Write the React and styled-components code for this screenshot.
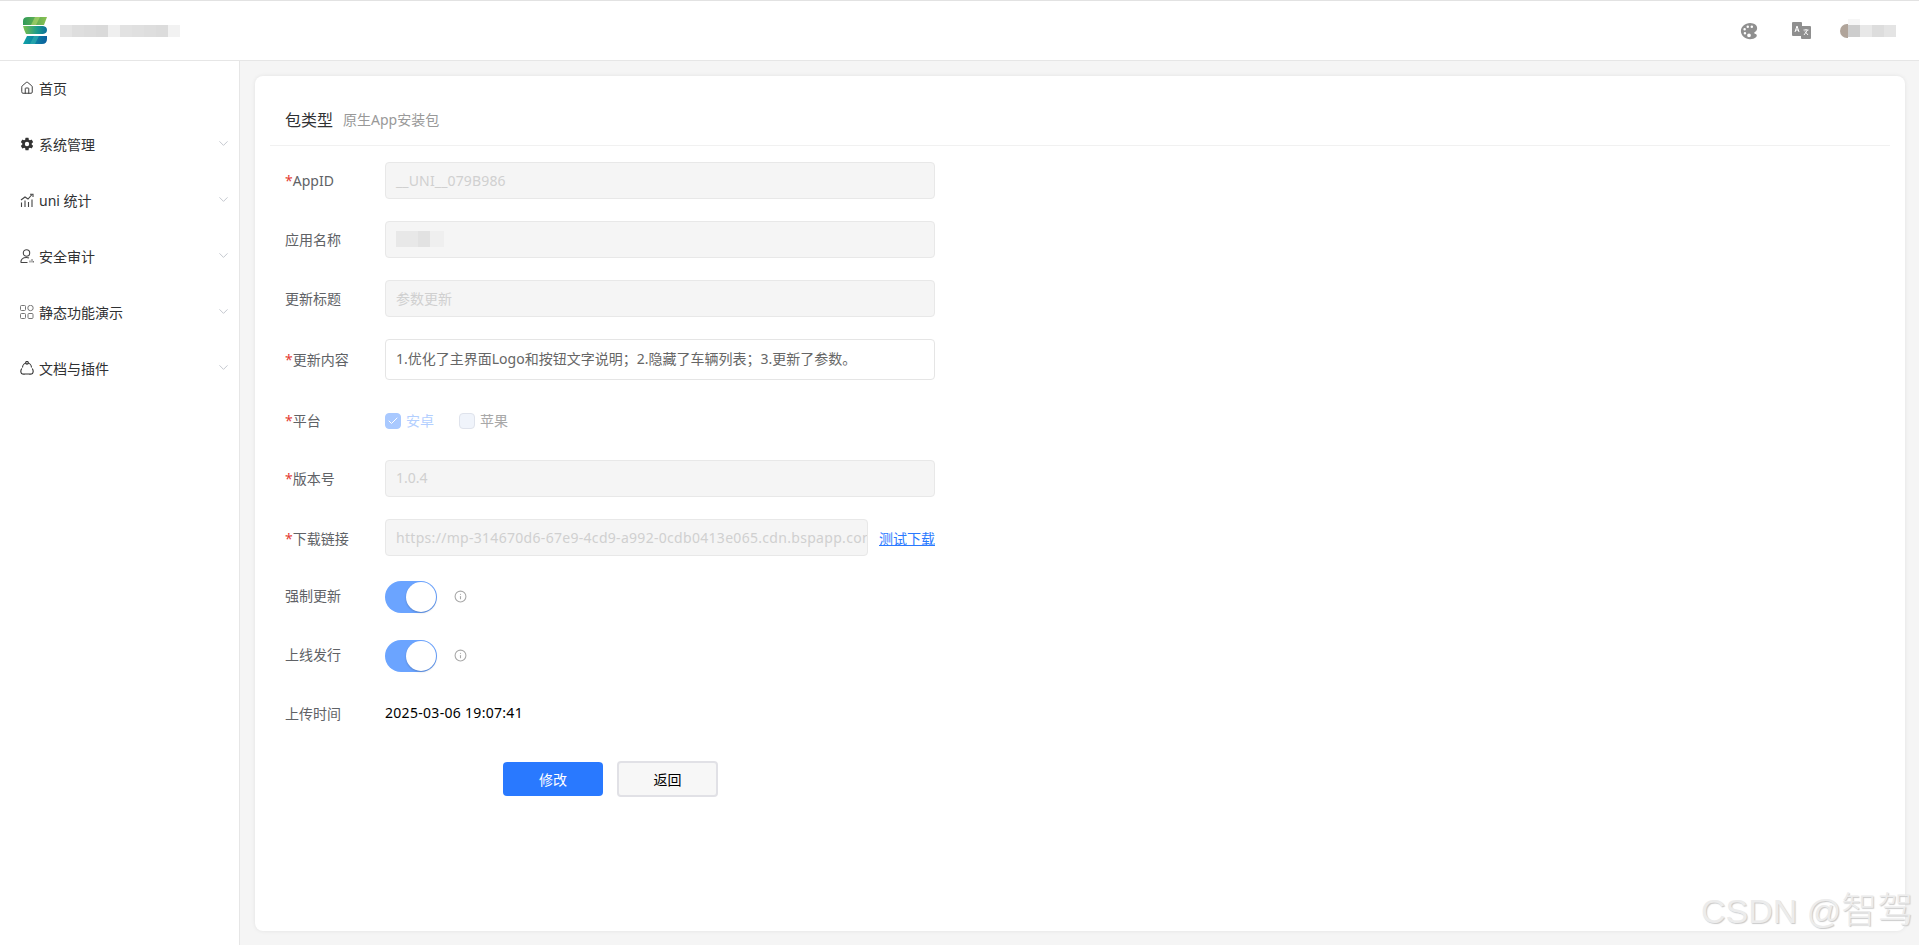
import styled, { createGlobalStyle } from "styled-components";
import { House, ChevronDown, Info, Check } from "lucide-react";
import { IoSettingsSharp, IoColorPalette } from "react-icons/io5";

const GlobalStyle = createGlobalStyle`
    html, body {
        margin: 0;
        padding: 0;
        height: 945px;
        overflow: hidden;
        background: #f5f5f5;
        font-family: "Noto Sans", "Noto Sans CJK SC", sans-serif;
        font-size: 14px;
    }
    * {
        box-sizing: border-box;
    }
`

const Page = styled.div`
    position: relative;
    height: 945px;
    display: flex;
    flex-direction: column;
`

const Header = styled.header`
    height: 61px;
    flex-shrink: 0;
    background: #fff;
    border-top: 1px solid #e2e2e2;
    border-bottom: 1px solid #e6e6e6;
    display: flex;
    align-items: center;
    justify-content: space-between;
    padding: 0 23px;
`

const Brand = styled.div`
    display: flex;
    align-items: center;
    gap: 13px;
`

const Tools = styled.div`
    display: flex;
    align-items: center;
    color: #8f8f8f;
`

const ToolIcon = styled.span`
    display: flex;
    margin-right: ${(p) => p.$gap}px;
`

const Mosaic = styled.div`
    display: flex;
    height: ${(p) => p.$h}px;
`

const Cell = styled.i`
    display: block;
    width: ${(p) => p.$w}px;
    background: ${(p) => p.$c};
`

const Avatar = styled.div`
    position: relative;
    display: flex;
    align-items: center;
    padding-left: 4px;
    &::before {
        content: "";
        position: absolute;
        left: 0;
        top: -1px;
        width: 8px;
        height: 14px;
        border-radius: 8px 0 0 8px;
        background: #b0a49a;
    }
    &::after {
        content: "";
        position: absolute;
        left: 8px;
        top: -6px;
        width: 12px;
        height: 6px;
        background: #f6f6f6;
    }
`

const Body = styled.div`
    flex: 1;
    display: flex;
    min-height: 0;
`

const Sidebar = styled.aside`
    width: 240px;
    flex-shrink: 0;
    background: #fff;
    border-right: 1px solid #e6e6e6;
`

const MenuItem = styled.div`
    height: 56px;
    display: flex;
    align-items: center;
    padding: 0 8px 3px 20px;
    color: #303133;
`

const MenuIcon = styled.span`
    width: 19px;
    display: flex;
    color: #333;
`

const MenuText = styled.span`
    flex: 1;
`

const Main = styled.main`
    flex: 1;
    padding: 15px 14px 14px 15px;
    min-width: 0;
`

const Card = styled.section`
    height: 100%;
    background: #fff;
    border-radius: 8px;
    box-shadow: 0 0 4px rgba(0, 0, 0, 0.08);
    padding: 0 15px;
`

const TitleRow = styled.div`
    height: 70px;
    padding: 17px 15px 0;
    display: flex;
    align-items: center;
    border-bottom: 1px solid #f1f1f1;
    margin-bottom: 16px;
`

const Title = styled.span`
    font-size: 16px;
    color: #303133;
`

const SubTitle = styled.span`
    font-size: 14px;
    color: #999;
    margin-left: 10px;
`

const Form = styled.div`
    padding-left: 15px;
    width: 665px;
`

const Row = styled.div`
    display: flex;
    align-items: center;
    min-height: 37px;
    margin-bottom: ${(p) => p.$gap || 22}px;
`

const Label = styled.label`
    width: 100px;
    flex-shrink: 0;
    color: #606266;
    padding-bottom: ${(p) => p.$up || 0}px;
`

const Star = styled.span`
    color: #e43d33;
`

const Field = styled.div`
    flex: 1;
    min-width: 0;
    height: ${(p) => p.$h || 37}px;
    display: flex;
    align-items: center;
    padding: 0 0 ${(p) => p.$up ?? 2}px 10px;
    overflow: hidden;
    white-space: nowrap;
    letter-spacing: ${(p) => p.$track || 0}px;
    border: 1px solid ${(p) => (p.$active ? "#e5e5e5" : "#e8e8e8")};
    border-radius: 4px;
    background: ${(p) => (p.$active ? "#fff" : "#f5f5f5")};
    color: ${(p) => (p.$active ? "#666" : "#d0d0d0")};
`

const TestLink = styled.a`
    margin-left: 11px;
    color: #2979ff;
    text-decoration: underline;
    white-space: nowrap;
`

const Checks = styled.div`
    display: flex;
    align-items: center;
    gap: 25px;
`

const CheckItem = styled.span`
    display: flex;
    align-items: center;
    gap: 5px;
    line-height: 16px;
    color: ${(p) => (p.$on ? "#b3cfff" : "#a8a8a8")};
`

const CheckBox = styled.span`
    width: 16px;
    height: 16px;
    border-radius: 4px;
    display: flex;
    align-items: center;
    justify-content: center;
    color: #fff;
    background: ${(p) => (p.$on ? "#a9c9ff" : "#f0f4fb")};
    border: 1px solid ${(p) => (p.$on ? "#a9c9ff" : "#dfe3ec")};
`

const Switch = styled.span`
    width: 52px;
    height: 32px;
    border-radius: 16px;
    background: #6ba4ff;
    padding: 1px;
    display: flex;
    justify-content: flex-end;
    &::after {
        content: "";
        width: 30px;
        height: 30px;
        border-radius: 50%;
        background: #fff;
        box-shadow: 0 1px 2px rgba(0, 0, 0, 0.2);
    }
`

const Hint = styled.span`
    display: flex;
    margin-left: 17px;
    color: #a9a9a9;
`

const Time = styled.span`
    color: #000;
    letter-spacing: 0.3px;
    padding-bottom: 4px;
`

const Actions = styled.div`
    display: flex;
    align-items: center;
    gap: 14px;
    padding-left: 218px;
    margin-top: 28px;
`

const Button = styled.button`
    width: ${(p) => (p.$primary ? 100 : 101)}px;
    height: ${(p) => (p.$primary ? 34 : 36)}px;
    border-radius: 4px;
    font: inherit;
    color: ${(p) => (p.$primary ? "#fff" : "#000")};
    background: ${(p) => (p.$primary ? "#2979ff" : "#f7f7f7")};
    border: ${(p) => (p.$primary ? "none" : "2px solid #e1e1e6")};
`

const Watermark = styled.div`
    position: absolute;
    left: 1701px;
    top: 889px;
    font-family: "Liberation Sans", "Noto Sans CJK SC", sans-serif;
    font-size: 34px;
    line-height: 44px;
    white-space: nowrap;
    color: #ececec;
    text-shadow: 1px 1px 1px #cacaca;
`

const WatermarkName = styled.span`
    font-size: 36px;
    font-weight: 300;
`

const Logo = () => (
    <svg width="24" height="27" viewBox="0 0 24 27">
        <defs>
            <linearGradient id="logoTop" x1="0" x2="1" y1="0" y2="0">
                <stop offset="0" stopColor="#2f9a58" />
                <stop offset="1" stopColor="#8cc152" />
            </linearGradient>
            <linearGradient id="logoMid" x1="0" x2="1" y1="0" y2="0">
                <stop offset="0" stopColor="#7cc04b" />
                <stop offset="0.6" stopColor="#1a9a8c" />
                <stop offset="1" stopColor="#0d6f9b" />
            </linearGradient>
            <linearGradient id="logoBot" x1="0" x2="1" y1="0" y2="0">
                <stop offset="0" stopColor="#0fa3a6" />
                <stop offset="1" stopColor="#0a5f9e" />
            </linearGradient>
        </defs>
        <path d="M5 0H24L21 8H0V4Q0 0 5 0Z" fill="url(#logoTop)" />
        <path d="M12 0H17L13 8H8Z" fill="#b5d96c" opacity="0.6" />
        <path d="M0 9H20Q24 9.500 24 13Q24 16.500 20 17H3Q1 13 0 9Z" fill="url(#logoMid)" />
        <path d="M4 19H24V22Q24 27 19 27H0Z" fill="url(#logoBot)" />
        <path d="M11 19H16L12 27H7Z" fill="#33b6b0" opacity="0.6" />
    </svg>
)

const Translate = () => (
    <svg width="19" height="18" viewBox="0 0 19 18">
        <rect x="0" y="0" width="10" height="14" rx="1" fill="#8f8f8f" />
        <rect x="9" y="4" width="10" height="13" rx="1" fill="#8f8f8f" />
        <path d="M3 10l2-6 2 6M3.800 8h2.400" fill="none" stroke="#fff" strokeWidth="1" />
        <path d="M11.500 8h5M14 7v1M12 13l3.500-5M13 9.500l3 3.500" fill="none" stroke="#fff" strokeWidth="0.900" />
    </svg>
)

const Stats = () => (
    <svg width="14" height="14" viewBox="0 0 14 14" fill="none" stroke="#444" strokeWidth="1.100">
        <path d="M1 7L5 4L8 6L12 1.500" />
        <path d="M10 1.200H13V4" />
        <path d="M1.500 9.500V14M5 7.500V14M8.500 9V14M12 6.500V14" />
    </svg>
)

const Auditor = () => (
    <svg width="14" height="14" viewBox="0 0 14 14" fill="none" stroke="#444" strokeWidth="1.100">
        <circle cx="6.500" cy="4" r="3.200" />
        <path d="M0.800 13.500Q1 8.500 6.500 8.500Q8 8.500 9 9M0.800 13.500H7.500" />
        <path d="M10 13.500V11.500M12 13.500V10M13.500 13.500V12" stroke="#777" />
    </svg>
)

const Blocks = () => (
    <svg width="14" height="14" viewBox="0 0 14 14" fill="none" stroke="#777" strokeWidth="1">
        <rect x="0.500" y="0.500" width="5" height="5" rx="1" />
        <circle cx="10.500" cy="3" r="2.700" />
        <rect x="0.500" y="8.500" width="5" height="5" rx="1" />
        <rect x="8" y="8.500" width="5" height="5" rx="1" />
    </svg>
)

const Plugin = () => (
    <svg width="14" height="14" viewBox="0 0 14 14" fill="none" stroke="#333" strokeWidth="1.100">
        <path d="M2.500 6.500a4.500 4.500 0 0 1 9 0" />
        <path d="M1.800 7.500Q0 10 1.500 12.500Q3 13.500 5 13H9Q11 13.500 12.500 12.500Q14 10 12.200 7.500" />
        <circle cx="7" cy="1.800" r="1.300" fill="#fff" />
    </svg>
)

const brandCells = ["#e4e4e4", "#dedede", "#dcdcdc", "#dadada", "#efefef", "#e2e2e2", "#e0e0e0", "#dedede", "#dcdcdc", "#f2f2f2"]
const avatarCells = [["#cdcdcd", 16], ["#e8e8e8", 12], ["#dddddd", 12], ["#e4e4e4", 12]]
const nameCells = [["#e8e8e8", 22], ["#e2e2e2", 12], ["#efefef", 14]]

const menus = [
    { text: "首页", icon: <House size={14} strokeWidth={1.6} /> },
    { text: "系统管理", icon: <IoSettingsSharp size={14} />, sub: true },
    { text: "uni 统计", icon: <Stats />, sub: true },
    { text: "安全审计", icon: <Auditor />, sub: true },
    { text: "静态功能演示", icon: <Blocks />, sub: true },
    { text: "文档与插件", icon: <Plugin />, sub: true },
]

const App = () => {
    return (
        <Page>
            <GlobalStyle />
            <Header>
                <Brand>
                    <Logo />
                    <Mosaic $h={12}>
                        {brandCells.map((c, i) => <Cell key={i} $w={12} $c={c} />)}
                    </Mosaic>
                </Brand>
                <Tools>
                    <ToolIcon $gap={33}><IoColorPalette size={20} /></ToolIcon>
                    <ToolIcon $gap={29}><Translate /></ToolIcon>
                    <Avatar>
                        <Mosaic $h={12}>
                            {avatarCells.map(([c, w], i) => <Cell key={i} $w={w} $c={c} />)}
                        </Mosaic>
                    </Avatar>
                </Tools>
            </Header>
            <Body>
                <Sidebar>
                    {menus.map((m) => (
                        <MenuItem key={m.text}>
                            <MenuIcon>{m.icon}</MenuIcon>
                            <MenuText>{m.text}</MenuText>
                            {m.sub && <ChevronDown size={15} strokeWidth={1.5} color="#c0c4cc" />}
                        </MenuItem>
                    ))}
                </Sidebar>
                <Main>
                    <Card>
                        <TitleRow>
                            <Title>包类型</Title>
                            <SubTitle>原生App安装包</SubTitle>
                        </TitleRow>
                        <Form>
                            <Row>
                                <Label><Star>*</Star>AppID</Label>
                                <Field $up={0} $track={0.15}>__UNI__079B986</Field>
                            </Row>
                            <Row>
                                <Label $up={2}>应用名称</Label>
                                <Field>
                                    <Mosaic $h={16}>
                                        {nameCells.map(([c, w], i) => <Cell key={i} $w={w} $c={c} />)}
                                    </Mosaic>
                                </Field>
                            </Row>
                            <Row>
                                <Label $up={2}>更新标题</Label>
                                <Field>参数更新</Field>
                            </Row>
                            <Row>
                                <Label $up={2}><Star>*</Star>更新内容</Label>
                                <Field $h={41} $up={4} $active>1.优化了主界面Logo和按钮文字说明；2.隐藏了车辆列表；3.更新了参数。</Field>
                            </Row>
                            <Row $gap={21}>
                                <Label $up={2}><Star>*</Star>平台</Label>
                                <Checks>
                                    <CheckItem $on>
                                        <CheckBox $on><Check size={12} strokeWidth={2} /></CheckBox>安卓
                                    </CheckItem>
                                    <CheckItem>
                                        <CheckBox />苹果
                                    </CheckItem>
                                </Checks>
                            </Row>
                            <Row>
                                <Label $up={2}><Star>*</Star>版本号</Label>
                                <Field>1.0.4</Field>
                            </Row>
                            <Row>
                                <Label><Star>*</Star>下载链接</Label>
                                <Field $up={0} $track={0.3}>https://mp-314670d6-67e9-4cd9-a992-0cdb0413e065.cdn.bspapp.com</Field>
                                <TestLink>测试下载</TestLink>
                            </Row>
                            <Row>
                                <Label $up={3}>强制更新</Label>
                                <Switch />
                                <Hint><Info size={13} /></Hint>
                            </Row>
                            <Row>
                                <Label $up={3}>上线发行</Label>
                                <Switch />
                                <Hint><Info size={13} /></Hint>
                            </Row>
                            <Row>
                                <Label $up={4}>上传时间</Label>
                                <Time>2025-03-06 19:07:41</Time>
                            </Row>
                            <Actions>
                                <Button $primary>修改</Button>
                                <Button>返回</Button>
                            </Actions>
                        </Form>
                    </Card>
                </Main>
            </Body>
            <Watermark>CSDN @<WatermarkName>智驾</WatermarkName></Watermark>
        </Page>
    )
}

export default App;
